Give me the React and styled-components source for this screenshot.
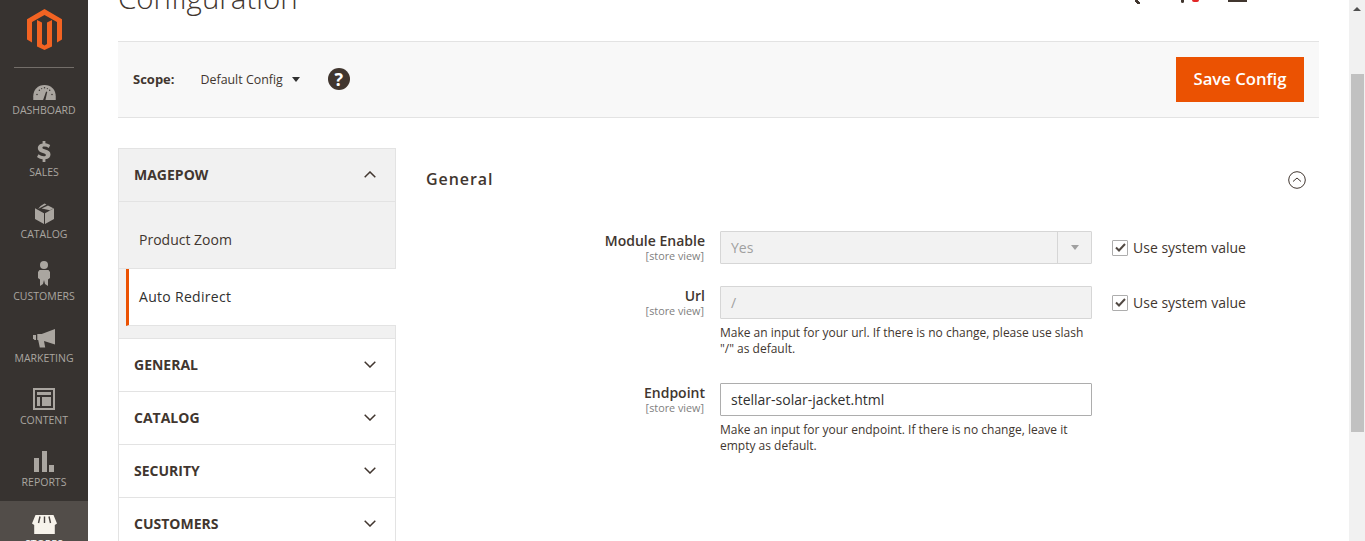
import styled, { createGlobalStyle } from "styled-components";

const GlobalStyle = createGlobalStyle`
  html, body {
    margin: 0;
    height: 100%;
    overflow: hidden;
    background: #fff;
    font-family: "Open Sans", "Liberation Sans", sans-serif;
    color: #303030;
  }
  #root { height: 100%; }
  * { box-sizing: border-box; }
`;

const MENU = [
  { label: "DASHBOARD", icon: <DashboardIcon /> },
  { label: "SALES", icon: <SalesIcon /> },
  { label: "CATALOG", icon: <CatalogIcon /> },
  { label: "CUSTOMERS", icon: <CustomersIcon /> },
  { label: "MARKETING", icon: <MarketingIcon /> },
  { label: "CONTENT", icon: <ContentIcon /> },
  { label: "REPORTS", icon: <ReportsIcon /> },
  { label: "STORES", icon: <StoresIcon />, active: true },
];

const SECTIONS = ["GENERAL", "CATALOG", "SECURITY", "CUSTOMERS"];

function LogoIcon() {
  return (
    <svg width="35" height="41" viewBox="0 0 35 41">
      <path fill="#f26322" d="M17.500 0 35 10.200v20.400l-5 2.900V13.100L17.500 5.900 5 13.100v20.400l-5-2.900V10.200z" />
      <path fill="#f26322" d="M15 13.500v21.500l2.500 1.500 2.500-1.500V13.500l5 -2.400v26.500L17.500 41 10 37.600V11.100z" />
    </svg>
  );
}

function DashboardIcon() {
  return (
    <svg width="23" height="15" viewBox="0 0 24 16">
      <path fill="#aaa6a0" d="M0 16v-4C0 5 5 0 12 0s12 5 12 12v4z" />
      <path fill="#373330" d="M10.500 16l3.200-9 1.200.4L13 16z" />
      <g fill="#373330">
        <circle cx="4" cy="10" r=".8" /><circle cx="6.500" cy="5.500" r=".8" /><circle cx="12" cy="3" r=".8" />
        <circle cx="17.500" cy="5.500" r=".8" /><circle cx="20" cy="10" r=".8" /><circle cx="9" cy="3.800" r=".6" /><circle cx="15" cy="3.800" r=".6" />
      </g>
    </svg>
  );
}

function SalesIcon() {
  return (
    <svg width="14" height="21" viewBox="0 0 14 21">
      <path fill="#aaa6a0" d="M5.600 0h2.800v2.300c1.900.2 3.500.9 4.800 1.800l-1.400 2.800c-1.400-.9-2.900-1.400-4.400-1.400-1.300 0-2 .4-2 1.200 0 .8.7 1.100 2.900 1.800 3.100.9 5.200 2.100 5.200 5 0 2.600-1.800 4.300-5.100 4.700V21H5.600v-2.700c-2.200-.2-4.200-1-5.600-2.200l1.500-2.800c1.600 1.200 3.500 1.900 5.200 1.900 1.400 0 2.200-.5 2.200-1.300 0-.9-.8-1.300-3-2C2.800 11 .8 9.800.8 7c0-2.400 1.800-4.200 4.800-4.600z" />
    </svg>
  );
}

function CatalogIcon() {
  return (
    <svg width="19" height="21" viewBox="0 0 19 21">
      <path fill="#aaa6a0" d="M9 10.200V21L0 16V5.200zM10 10.200 19 5.200V16l-9 5zM5.500 2.900 9.500.5l2 1.100-8.400 4.400zM13 2.500l5.400 2.700-3.500 2L6.700 5.500l-.1-.1z" />
    </svg>
  );
}

function CustomersIcon() {
  return (
    <svg width="12" height="25" viewBox="0 0 12 25">
      <circle cx="6" cy="4" r="4" fill="#aaa6a0" />
      <path fill="#aaa6a0" d="M1.500 9h9L12 11v6l-2 1.500V25l-3-2-1-4-1 4-3 2v-6.500L0 17v-6z" />
    </svg>
  );
}

function MarketingIcon() {
  return (
    <svg width="22" height="19" viewBox="0 0 22 19">
      <path fill="#aaa6a0" d="M22 0v15.500L11 12l1.200 6.500H6.800L5.200 11H4.300V5H8.700z" />
      <path fill="#aaa6a0" d="M0 6h3v5H1.500L0 9.500z" />
    </svg>
  );
}

function ContentIcon() {
  return (
    <svg width="22" height="22" viewBox="0 0 22 22">
      <path fill="#aaa6a0" fillRule="evenodd" d="M0 0h22v22H0zM2 2v18h18V2zM4 4h14v3H4zM4 9h3v9H4zM9 9h9v9H9z" />
    </svg>
  );
}

function ReportsIcon() {
  return (
    <svg width="20" height="21" viewBox="0 0 20 21">
      <path fill="#aaa6a0" d="M0 7h5v14H0zM8 0h5v21H8zM15 14h5v7h-5z" />
    </svg>
  );
}

function StoresIcon() {
  return (
    <svg width="25" height="19" viewBox="0 0 25 19">
      <path fill="#f7f3eb" d="M3.500 0h18L25 8.500l-2.200 1.500V19H2.200v-9L0 8.500z" />
      <path stroke="#4a4542" strokeWidth="1.400" d="M8 1.500 6.500 8M12.500 1.500V8M17 1.500 18.500 8" fill="none" />
    </svg>
  );
}

const Layout = styled.div`
  display: flex;
  height: 100vh;
  overflow: hidden;
`;

const Sidebar = styled.nav`
  flex: 0 0 88px;
  background: #373330;
  display: flex;
  flex-direction: column;
  align-items: stretch;
`;

const LogoWrap = styled.div`
  flex: 0 0 68px;
  margin: 0 14px;
  padding-top: 9px;
  display: flex;
  justify-content: center;
  align-items: flex-start;
  border-bottom: 1px solid #736e69;
`;

const MenuItem = styled.div`
  flex: 0 0 ${p => (p.$active ? "63px" : "62px")};
  margin-top: ${p => (p.$active ? "-1px" : "0")};
  display: flex;
  flex-direction: column;
  align-items: center;
  justify-content: flex-end;
  padding-bottom: 13px;
  background: ${p => (p.$active ? "#524d49" : "transparent")};
  color: ${p => (p.$active ? "#fff" : "#aaa6a0")};
  font-size: 10.5px;
  line-height: 14px;
  white-space: nowrap;
`;

const MenuIconBox = styled.div`
  height: 26px;
  display: flex;
  align-items: flex-end;
  justify-content: center;
  padding-bottom: 3px;
`;

const Main = styled.main`
  flex: 1;
  min-width: 0;
  padding: 0 30px;
`;

const TitleRow = styled.header`
  height: 41px;
  display: flex;
  justify-content: space-between;
`;

const Title = styled.h1`
  margin: -20px 0 0;
  font-size: 29.5px;
  font-weight: 300;
  line-height: 36px;
  color: #41362f;
`;

const TopIcons = styled.div`
  display: flex;
  align-items: flex-start;
  margin-right: 72px;
`;

const SearchStub = styled.span`
  width: 5px;
  height: 4px;
  margin-right: 41px;
  background: linear-gradient(to bottom left, transparent 30%, #41362f 30%, #41362f 70%, transparent 70%);
`;

const CartStub = styled.span`
  width: 3px;
  height: 3px;
  background: #41362f;
  border-radius: 0 0 2px 2px;
`;

const CartBadge = styled.span`
  width: 7px;
  height: 2px;
  margin-left: 8px;
  margin-right: 29px;
  background: #e22626;
  border-radius: 0 0 4px 4px;
`;

const UserStub = styled.span`
  width: 19px;
  height: 2px;
  background: #41362f;
`;

const ScopeBar = styled.div`
  height: 77px;
  display: flex;
  align-items: center;
  padding: 0 15px;
  background: #f8f8f8;
  border-top: 1px solid #e3e3e3;
  border-bottom: 1px solid #e3e3e3;
`;

const ScopeLabel = styled.span`
  font-size: 13px;
  font-weight: 700;
  color: #41362f;
  margin-right: 26px;
  padding-bottom: 2px;
`;

const ScopeSwitch = styled.span`
  font-size: 12.4px;
  color: #41362f;
  display: flex;
  align-items: center;
  gap: 9px;
`;

const Caret = styled.span`
  width: 0;
  height: 0;
  border-left: 4.5px solid transparent;
  border-right: 4.5px solid transparent;
  border-top: 5px solid ${p => p.$color || "#303030"};
`;

const HelpIcon = styled.span`
  width: 22px;
  height: 22px;
  margin-left: 28px;
  margin-top: -1px;
  border-radius: 50%;
  background: #41362f;
  color: #fff;
  font-size: 18px;
  font-weight: 700;
  line-height: 22px;
  text-align: center;
`;

const SaveButton = styled.button`
  margin-left: auto;
  width: 128px;
  height: 45px;
  border: 0;
  background: #eb5202;
  color: #fff;
  font-family: inherit;
  font-size: 16.7px;
  font-weight: 600;
  padding: 0 0 2px;
`;

const Columns = styled.div`
  display: flex;
  padding-top: 30px;
`;

const Tabs = styled.aside`
  flex: 0 0 278px;
`;

const TabHead = styled.div`
  height: ${p => (p.$first ? "54px" : "53px")};
  display: flex;
  align-items: center;
  justify-content: space-between;
  padding: 0 19px 2px 15px;
  background: ${p => (p.$open ? "#f1f1f1" : "#fff")};
  border: 1px solid #e3e3e3;
  border-top-width: ${p => (p.$first ? "1px" : "0")};
  font-size: 14px;
  font-weight: 700;
  color: #41362f;
`;

const SubList = styled.div`
  background: #f1f1f1;
  padding-bottom: 12px;
  border-left: 1px solid #e3e3e3;
  border-right: 1px solid #e3e3e3;
  border-bottom: 1px solid #e3e3e3;
`;

const SubItem = styled.div`
  height: ${p => p.$height}px;
  display: flex;
  align-items: ${p => (p.$active ? "center" : "flex-end")};
  margin-left: ${p => (p.$active ? "7px" : "0")};
  margin-right: -1px;
  padding-left: ${p => (p.$active ? "10px" : "20px")};
  padding-bottom: ${p => (p.$active ? "2px" : "19px")};
  background: ${p => (p.$active ? "#fff" : "transparent")};
  border-left: ${p => (p.$active ? "3px solid #eb5202" : "0")};
  border-bottom: 1px solid #e3e3e3;
  font-size: 14px;
  letter-spacing: ${p => (p.$active ? "0.3px" : "0")};
  color: ${p => (p.$active ? "#303030" : "#41362f")};
`;

const Content = styled.section`
  flex: 1;
  min-width: 0;
  padding-left: 30px;
`;

const SectionHead = styled.div`
  height: 62px;
  margin-bottom: 21px;
  display: flex;
  align-items: center;
  justify-content: space-between;
  padding-right: 13px;
  font-size: 16px;
  font-weight: 600;
  letter-spacing: 0.95px;
  color: #41362f;

  svg {
    margin-top: 2px;
  }
`;

const FieldRow = styled.div`
  display: grid;
  grid-template-columns: 279px 372px auto;
  column-gap: 15px;
  margin-bottom: ${p => p.$gap}px;
`;

const FieldLabel = styled.div`
  text-align: right;
  font-size: 14px;
  font-weight: 600;
  line-height: 20px;
  color: #41362f;

  small {
    display: block;
    padding-right: 1px;
    font-size: 10.8px;
    font-weight: 400;
    line-height: 10px;
    color: #808080;
  }
`;

const Input = styled.div`
  height: 33px;
  display: flex;
  align-items: center;
  padding-left: 10px;
  font-size: 14px;
  border: 1px solid ${p => (p.$disabled ? "#d6d6d6" : "#adadad")};
  border-radius: 1px;
  background: ${p => (p.$disabled ? "#f2f2f2" : "#fff")};
  color: ${p => (p.$disabled ? "#a0a0a0" : "#303030")};
`;

const SelectArrow = styled.span`
  margin-left: auto;
  align-self: stretch;
  width: 34px;
  display: flex;
  align-items: center;
  justify-content: center;
  border-left: 1px solid #d6d6d6;
`;

const Note = styled.div`
  margin-top: 6px;
  font-size: 12px;
  line-height: 16px;
  color: #41362f;
`;

const SystemValue = styled.label`
  display: flex;
  align-items: center;
  height: 33px;
  gap: 5px;
  padding-left: 5px;
  font-size: 14px;
  color: #41362f;
`;

const CheckBox = styled.span`
  width: 16px;
  height: 16px;
  display: flex;
  align-items: center;
  justify-content: center;
  border: 1px solid #adadad;
  border-radius: 1px;
  background: #fff;
`;

const Scrollbar = styled.div`
  flex: 0 0 16px;
  background: #f1f1f1;
  display: flex;
  flex-direction: column;
  align-items: center;
`;

const ScrollArrow = styled.span`
  margin-top: 7px;
  margin-bottom: 63px;
  width: 0;
  height: 0;
  border-left: 4px solid transparent;
  border-right: 4px solid transparent;
  border-bottom: 4px solid #505050;
`;

const ScrollThumb = styled.div`
  width: 13px;
  height: 358px;
  margin-left: 1px;
  background: #c1c1c1;
`;

const Chevron = ({ up }) => (
  <svg width="12" height="7" viewBox="0 0 12 7">
    <path d={up ? "M.7 6.300 6 1l5.300 5.300" : "M.7.700 6 6 11.300.700"} fill="none" stroke="#41362f" strokeWidth="1.500" />
  </svg>
);

const Check = () => (
  <svg width="11" height="9" viewBox="0 0 11 9">
    <path d="M1 4.500 4 7.500 10 1" fill="none" stroke="#514943" strokeWidth="2" />
  </svg>
);

const UseSystem = () => (
  <SystemValue>
    <CheckBox><Check /></CheckBox>
    Use system value
  </SystemValue>
);

export default function App() {
  return (
    <Layout>
      <GlobalStyle />
      <Sidebar>
        <LogoWrap><LogoIcon /></LogoWrap>
        {MENU.map(m => (
          <MenuItem key={m.label} $active={m.active}>
            <MenuIconBox>{m.icon}</MenuIconBox>
            {m.label}
          </MenuItem>
        ))}
      </Sidebar>
      <Main>
        <TitleRow>
          <Title>Configuration</Title>
          <TopIcons>
            <SearchStub />
            <CartStub />
            <CartBadge />
            <UserStub />
          </TopIcons>
        </TitleRow>
        <ScopeBar>
          <ScopeLabel>Scope:</ScopeLabel>
          <ScopeSwitch>Default Config <Caret /></ScopeSwitch>
          <HelpIcon>?</HelpIcon>
          <SaveButton>Save Config</SaveButton>
        </ScopeBar>
        <Columns>
          <Tabs>
            <TabHead $open $first>MAGEPOW <Chevron up /></TabHead>
            <SubList>
              <SubItem $height={67}>Product Zoom</SubItem>
              <SubItem $active $height={57}>Auto Redirect</SubItem>
            </SubList>
            {SECTIONS.map(s => (
              <TabHead key={s}>{s} <Chevron /></TabHead>
            ))}
          </Tabs>
          <Content>
            <SectionHead>
              General
              <svg width="18" height="18" viewBox="0 0 18 18">
                <circle cx="9" cy="9" r="8.300" fill="none" stroke="#41362f" />
                <path d="M5 10.500 9 7l4 3.500" fill="none" stroke="#41362f" />
              </svg>
            </SectionHead>
            <FieldRow $gap={22}>
              <FieldLabel>Module Enable<small>[store view]</small></FieldLabel>
              <Input $disabled>Yes<SelectArrow><Caret $color="#a0a0a0" /></SelectArrow></Input>
              <UseSystem />
            </FieldRow>
            <FieldRow $gap={26}>
              <FieldLabel>Url<small>[store view]</small></FieldLabel>
              <div>
                <Input $disabled>/</Input>
                <Note>Make an input for your url. If there is no change, please use slash "/" as default.</Note>
              </div>
              <UseSystem />
            </FieldRow>
            <FieldRow $gap={0}>
              <FieldLabel>Endpoint<small>[store view]</small></FieldLabel>
              <div>
                <Input>stellar-solar-jacket.html</Input>
                <Note>Make an input for your endpoint. If there is no change, leave it empty as default.</Note>
              </div>
            </FieldRow>
          </Content>
        </Columns>
      </Main>
      <Scrollbar>
        <ScrollArrow />
        <ScrollThumb />
      </Scrollbar>
    </Layout>
  );
}
